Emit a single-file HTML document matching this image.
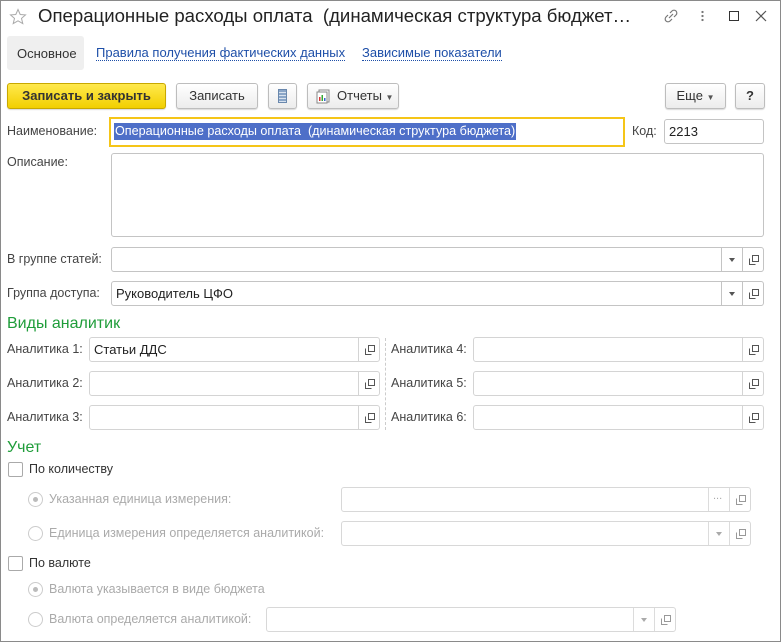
<!DOCTYPE html>
<html><head><meta charset="utf-8"><style>
*{box-sizing:border-box;margin:0;padding:0}
body{width:782px;height:642px;background:#fff;font-family:"Liberation Sans",Arial,sans-serif;font-size:12.5px;color:#333;position:relative;overflow:hidden}
.a{position:absolute;white-space:nowrap}
.win{position:absolute;left:0;top:0;width:781px;height:642px;border:1px solid #8a8a8a}
.btn{position:absolute;height:26px;border:1px solid #bdbdbd;border-radius:3px;background:linear-gradient(#fff,#ececec);box-shadow:0 1px 1px rgba(0,0,0,.15);text-align:center;line-height:24px;color:#333;font-size:13px}
.inp{position:absolute;border:1px solid #c4c4c4;border-radius:3px;background:#fff;height:25px}
.inp.dis{border-color:#d8d8d8}
.lbl{position:absolute;white-space:nowrap;color:#444}
.gray{color:#aaa}
.ob{position:absolute;top:0;bottom:0;width:21px;border-left:1px solid #c4c4c4}
.dis .ob{border-left-color:#dcdcdc}
.tri{position:absolute;left:7px;top:10px;width:0;height:0;border-left:3.5px solid transparent;border-right:3.5px solid transparent;border-top:4px solid #555}
.dis .tri{border-top-color:#aaa}
.op{position:absolute;left:6px;top:7px;width:10px;height:10px}
.cb{position:absolute;width:15px;height:15px;border:1px solid #aaa;border-radius:2px;background:#fff}
.rd{position:absolute;width:15px;height:15px;border:1px solid #ccc;border-radius:50%;background:#fff}
.rd.on::after{content:"";position:absolute;left:4px;top:4px;width:5px;height:5px;border-radius:50%;background:#bbb}
.grn{position:absolute;color:#1f9d3a;font-size:16px;white-space:nowrap}
</style></head><body>
<div class="win"></div>
<svg class="a" style="left:9px;top:8px" width="18" height="18" viewBox="0 0 18 18"><path d="M9 1.5l2.2 5 5.3.4-4 3.5 1.3 5.2L9 12.8l-4.8 2.8 1.3-5.2-4-3.5 5.3-.4z" fill="none" stroke="#aaa" stroke-width="1"/></svg>
<div class="a" style="left:38px;top:5px;font-size:18.6px;color:#222">Операционные расходы оплата&nbsp; (динамическая структура бюджет…</div>
<svg class="a" style="left:662px;top:7px" width="18" height="18" viewBox="0 0 18 18"><g fill="none" stroke="#777" stroke-width="1.2"><path d="M7 11l4-4"/><path d="M8 6l2-2a2.5 2.5 0 0 1 4 4l-2 2"/><path d="M10 12l-2 2a2.5 2.5 0 0 1-4-4l2-2"/></g></svg>
<div class="a" style="left:701px;top:10px;width:3px;height:12px;background:radial-gradient(circle,#777 1px,transparent 1.3px) 0 0/3px 4px"></div>
<div class="a" style="left:729px;top:11px;width:10px;height:10px;border:1.3px solid #333"></div>
<svg class="a" style="left:755px;top:10px" width="12" height="12"><path d="M1 1l10 10M11 1L1 11" stroke="#555" stroke-width="1.2"/></svg>

<div class="a" style="left:7px;top:36px;width:77px;height:34px;background:#efefef;border-radius:3px"></div>
<div class="a" style="left:17px;top:46px;font-size:13px;color:#333">Основное</div>
<div class="a" style="left:96px;top:46px;font-size:13px;color:#1e4fa8;border-bottom:1px dotted #1e4fa8;line-height:14px">Правила получения фактических данных</div>
<div class="a" style="left:362px;top:46px;font-size:13px;color:#1e4fa8;border-bottom:1px dotted #1e4fa8;line-height:14px">Зависимые показатели</div>

<div class="btn" style="left:7px;top:83px;width:159px;background:linear-gradient(#ffe94d,#f2cf00);border-color:#c8a800;font-weight:bold;color:#333">Записать и закрыть</div>
<div class="btn" style="left:176px;top:83px;width:82px">Записать</div>
<div class="btn" style="left:268px;top:83px;width:29px"><div class="a" style="left:9px;top:5px;width:9px;height:14px;background:repeating-linear-gradient(#8aa6c8 0 2px,#d8e2ee 2px 3px);border:1px solid #6a88ad"></div></div>
<div class="btn" style="left:307px;top:83px;width:92px;text-align:left;padding-left:29px">Отчеты <span style="font-size:8px;color:#555">▼</span>
<svg class="a" style="left:8px;top:5px" width="15" height="15"><rect x="3" y="1" width="10" height="12" fill="#fff" stroke="#888"/><rect x="1" y="3" width="10" height="11" fill="#fff" stroke="#888"/><rect x="3" y="8" width="1.5" height="4" fill="#d33"/><rect x="5.5" y="6" width="1.5" height="6" fill="#3a3"/><rect x="8" y="9" width="1.5" height="3" fill="#36c"/></svg></div>
<div class="btn" style="left:665px;top:83px;width:61px">Еще <span style="font-size:8px;color:#555">▼</span></div>
<div class="btn" style="left:735px;top:83px;width:30px;font-weight:bold">?</div>

<div class="lbl" style="left:7px;top:124px">Наименование:</div>
<div class="a" style="left:109px;top:117px;width:516px;height:30px;border:2px solid #f5c518"></div>
<div class="a" style="left:114px;top:123px;height:17px;background:#4e6fc8;color:#fff;font-size:12.6px;line-height:17px;padding:0 1px">Операционные расходы оплата&nbsp; (динамическая структура бюджета)</div>
<div class="lbl" style="left:632px;top:124px">Код:</div>
<div class="inp" style="left:664px;top:119px;width:100px;padding:4px 4px;font-size:13px;color:#222">2213</div>

<div class="lbl" style="left:7px;top:155px">Описание:</div>
<div class="inp" style="left:111px;top:153px;width:653px;height:84px"></div>

<div class="lbl" style="left:7px;top:252px">В группе статей:</div>
<div class="inp" style="left:111px;top:247px;width:653px"><div class="ob" style="right:21px"><div class="tri"></div></div><div class="ob" style="right:0"><svg class="op"><path d="M3.5 .5h6v6h-6zM.5 3.5v6h6" fill="none" stroke="#555"/></svg></div></div>
<div class="lbl" style="left:7px;top:286px">Группа доступа:</div>
<div class="inp" style="left:111px;top:281px;width:653px;padding:4px 4px;font-size:13px;color:#222">Руководитель ЦФО<div class="ob" style="right:21px"><div class="tri"></div></div><div class="ob" style="right:0"><svg class="op"><path d="M3.5 .5h6v6h-6zM.5 3.5v6h6" fill="none" stroke="#555"/></svg></div></div>

<div class="grn" style="left:7px;top:315px">Виды аналитик</div>
<div class="a" style="left:385px;top:338px;height:92px;border-left:1px dashed #ccc"></div>

<div class="lbl" style="left:7px;top:342px">Аналитика 1:</div>
<div class="inp" style="left:89px;top:337px;width:291px;border-color:#d4d4d4;padding:4px 4px;font-size:13px;color:#222">Статьи ДДС<div class="ob" style="right:0;border-left-color:#d4d4d4"><svg class="op"><path d="M3.5 .5h6v6h-6zM.5 3.5v6h6" fill="none" stroke="#555"/></svg></div></div>
<div class="lbl" style="left:7px;top:376px">Аналитика 2:</div>
<div class="inp" style="left:89px;top:371px;width:291px;border-color:#d4d4d4"><div class="ob" style="right:0;border-left-color:#d4d4d4"><svg class="op"><path d="M3.5 .5h6v6h-6zM.5 3.5v6h6" fill="none" stroke="#555"/></svg></div></div>
<div class="lbl" style="left:7px;top:410px">Аналитика 3:</div>
<div class="inp" style="left:89px;top:405px;width:291px;border-color:#d4d4d4"><div class="ob" style="right:0;border-left-color:#d4d4d4"><svg class="op"><path d="M3.5 .5h6v6h-6zM.5 3.5v6h6" fill="none" stroke="#555"/></svg></div></div>

<div class="lbl" style="left:391px;top:342px">Аналитика 4:</div>
<div class="inp" style="left:473px;top:337px;width:291px;border-color:#d4d4d4"><div class="ob" style="right:0;border-left-color:#d4d4d4"><svg class="op"><path d="M3.5 .5h6v6h-6zM.5 3.5v6h6" fill="none" stroke="#555"/></svg></div></div>
<div class="lbl" style="left:391px;top:376px">Аналитика 5:</div>
<div class="inp" style="left:473px;top:371px;width:291px;border-color:#d4d4d4"><div class="ob" style="right:0;border-left-color:#d4d4d4"><svg class="op"><path d="M3.5 .5h6v6h-6zM.5 3.5v6h6" fill="none" stroke="#555"/></svg></div></div>
<div class="lbl" style="left:391px;top:410px">Аналитика 6:</div>
<div class="inp" style="left:473px;top:405px;width:291px;border-color:#d4d4d4"><div class="ob" style="right:0;border-left-color:#d4d4d4"><svg class="op"><path d="M3.5 .5h6v6h-6zM.5 3.5v6h6" fill="none" stroke="#555"/></svg></div></div>

<div class="grn" style="left:7px;top:439px">Учет</div>
<div class="cb" style="left:8px;top:462px"></div>
<div class="lbl" style="left:29px;top:462px;color:#333">По количеству</div>
<div class="rd on" style="left:28px;top:492px"></div>
<div class="lbl gray" style="left:49px;top:492px">Указанная единица измерения:</div>
<div class="inp dis" style="left:341px;top:487px;width:410px"><div class="ob" style="right:21px"><span class="a" style="left:4px;top:2px;color:#aaa;font-size:11px">...</span></div><div class="ob" style="right:0"><svg class="op"><path d="M3.5 .5h6v6h-6zM.5 3.5v6h6" fill="none" stroke="#999"/></svg></div></div>
<div class="rd" style="left:28px;top:526px"></div>
<div class="lbl gray" style="left:49px;top:526px">Единица измерения определяется аналитикой:</div>
<div class="inp dis" style="left:341px;top:521px;width:410px"><div class="ob" style="right:21px"><div class="tri"></div></div><div class="ob" style="right:0"><svg class="op"><path d="M3.5 .5h6v6h-6zM.5 3.5v6h6" fill="none" stroke="#999"/></svg></div></div>

<div class="cb" style="left:8px;top:556px"></div>
<div class="lbl" style="left:29px;top:556px;color:#333">По валюте</div>
<div class="rd on" style="left:28px;top:582px"></div>
<div class="lbl gray" style="left:49px;top:582px">Валюта указывается в виде бюджета</div>
<div class="rd" style="left:28px;top:612px"></div>
<div class="lbl gray" style="left:49px;top:612px">Валюта определяется аналитикой:</div>
<div class="inp dis" style="left:266px;top:607px;width:410px"><div class="ob" style="right:21px"><div class="tri"></div></div><div class="ob" style="right:0"><svg class="op"><path d="M3.5 .5h6v6h-6zM.5 3.5v6h6" fill="none" stroke="#999"/></svg></div></div>
</body></html>
